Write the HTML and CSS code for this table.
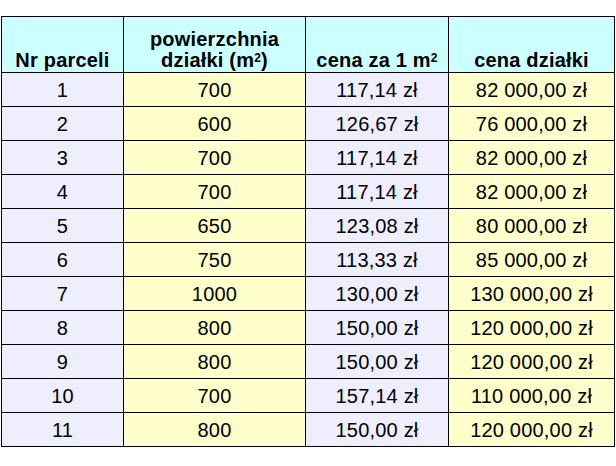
FILE: index.html
```html
<!DOCTYPE html>
<html lang="pl">
<head>
<meta charset="utf-8">
<title>Parcele</title>
<link rel="stylesheet" href="styles.css">
</head>
<body>
<table class="parcels">
  <colgroup>
    <col class="c1"><col class="c2"><col class="c3"><col class="c4">
  </colgroup>
  <thead>
    <tr>
      <th>Nr parceli</th>
      <th>powierzchnia<br>działki (m<sup>2</sup>)</th>
      <th>cena za 1 m<sup>2</sup></th>
      <th>cena działki</th>
    </tr>
  </thead>
  <tbody>
    <tr><td class="lav">1</td><td class="yel">700</td><td class="lav">117,14 zł</td><td class="yel">82 000,00 zł</td></tr>
    <tr><td class="lav">2</td><td class="yel">600</td><td class="lav">126,67 zł</td><td class="yel">76 000,00 zł</td></tr>
    <tr><td class="lav">3</td><td class="yel">700</td><td class="lav">117,14 zł</td><td class="yel">82 000,00 zł</td></tr>
    <tr><td class="lav">4</td><td class="yel">700</td><td class="lav">117,14 zł</td><td class="yel">82 000,00 zł</td></tr>
    <tr><td class="lav">5</td><td class="yel">650</td><td class="lav">123,08 zł</td><td class="yel">80 000,00 zł</td></tr>
    <tr><td class="lav">6</td><td class="yel">750</td><td class="lav">113,33 zł</td><td class="yel">85 000,00 zł</td></tr>
    <tr><td class="lav">7</td><td class="yel">1000</td><td class="lav">130,00 zł</td><td class="yel">130 000,00 zł</td></tr>
    <tr><td class="lav">8</td><td class="yel">800</td><td class="lav">150,00 zł</td><td class="yel">120 000,00 zł</td></tr>
    <tr><td class="lav">9</td><td class="yel">800</td><td class="lav">150,00 zł</td><td class="yel">120 000,00 zł</td></tr>
    <tr><td class="lav">10</td><td class="yel">700</td><td class="lav">157,14 zł</td><td class="yel">110 000,00 zł</td></tr>
    <tr><td class="lav">11</td><td class="yel">800</td><td class="lav">150,00 zł</td><td class="yel">120 000,00 zł</td></tr>
  </tbody>
</table>
</body>
</html>
```
FILE: styles.css
```css
html, body {
  margin: 0;
  padding: 0;
  background: #ffffff;
}
body {
  padding: 16px 0 0 1px;
  font-family: "Liberation Sans", Arial, sans-serif;
  color: #000000;
}
.parcels {
  border-collapse: collapse;
  table-layout: fixed;
  width: 613px;
}
.c1 { width: 122px; }
.c2 { width: 182px; }
.c3 { width: 143px; }
.c4 { width: 166px; }
.parcels th,
.parcels td {
  border: 1px solid #000000;
  padding: 0;
  text-align: center;
  font-size: 20px;
  letter-spacing: 0.2px;
  white-space: nowrap;
}
.parcels th {
  background: #ccffff;
  font-weight: bold;
  height: 54px;
  vertical-align: bottom;
  line-height: 21px;
  padding-bottom: 1px;
}
.parcels td {
  height: 32px;
  vertical-align: middle;
  line-height: 22px;
  padding-top: 1px;
}
.parcels sup {
  font-size: 12px;
  line-height: 0;
  vertical-align: 5px;
}
.lav { background: #eeeeff; }
.yel { background: #ffffcc; }
```
